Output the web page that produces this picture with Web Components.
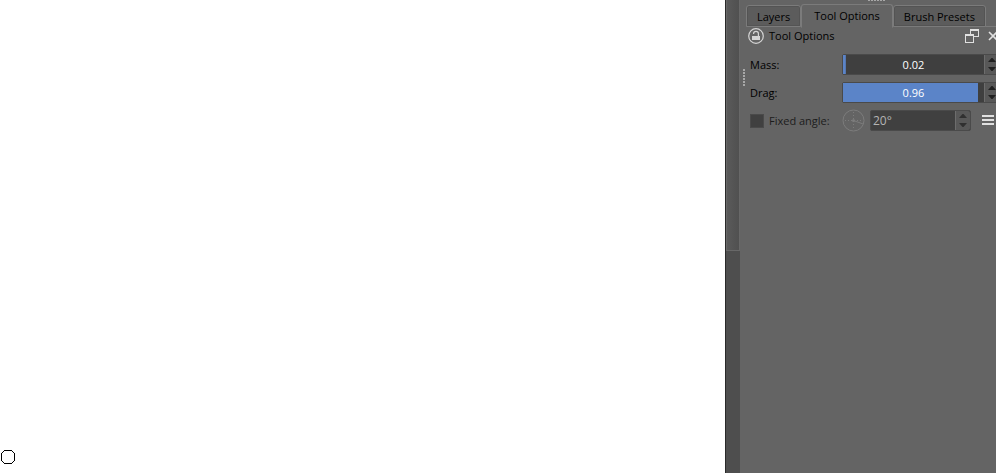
<!DOCTYPE html>
<html lang="en">
<head>
<meta charset="utf-8">
<title>Tool Options</title>
<style>
html, body { margin: 0; height: 100%; overflow: hidden; }
body { font: 11px/16px "Open Sans", "Noto Sans", sans-serif; color: #000; background: #646464; }
</style>
</head>
<body>
<paint-app></paint-app>
<script>
const define = (name, html, init) => {
  const template = document.createElement('template');
  template.innerHTML = html;
  customElements.define(name, class extends HTMLElement {
    constructor() {
      super();
      this.attachShadow({ mode: 'open' }).append(template.content.cloneNode(true));
    }
    connectedCallback() { if (init) init(this, this.shadowRoot); }
  });
};

define('paint-canvas', `
<style>
:host { display: block; position: relative; background: #fff; }
svg { position: absolute; left: 1px; bottom: 9px; display: block; }
</style>
<svg width="14" height="14" viewBox="0 0 14 14" shape-rendering="crispEdges"><path d="M3 0h8v1H3zM3 13h8v1H3zM0 3h1v8H0zM13 3h1v8h-1zM2 1h1v1H2zM11 1h1v1h-1zM1 2h1v1H1zM12 2h1v1h-1zM1 11h1v1H1zM12 11h1v1h-1zM2 12h1v1H2zM11 12h1v1h-1z"/></svg>`);

define('canvas-scrollbar', `
<style>
:host { display: block; box-sizing: border-box; background: #4e4e4e; border-left: 1px solid #2a2a2a; }
div { box-sizing: border-box; height: 53%; border: 1px solid #686868; border-top: 0; background: linear-gradient(90deg, #5a5a5a, #505050); }
</style>
<div></div>`);

define('dock-tabs', `
<style>
:host { display: flex; align-items: flex-end; height: 24px; padding: 4px 0 0 6px; background: linear-gradient(#7b7b7b, #7b7b7b) 6px 26px / 100% 1px no-repeat; }
button { box-sizing: border-box; height: 22px; padding: 2px 10px 0; margin-bottom: 1px; border: 1px solid #7b7b7b; border-radius: 3px 3px 0 0; background: #5c5c5c; box-shadow: inset 0 0 0 1px #545454; font: inherit; color: inherit; white-space: nowrap; }
button[aria-selected=true] { height: 24px; padding: 0 12px; margin-bottom: 0; background: #646464; border-bottom-color: #646464; box-shadow: none; }
</style>
<button role="tab">Layers</button><button role="tab" aria-selected="true">Tool Options</button><button role="tab">Brush Presets</button>`);

define('dock-header', `
<style>
:host { display: flex; align-items: center; height: 16px; padding-left: 8px; width: 250px; }
button { display: block; padding: 0; border: 0; background: none; line-height: 0; }
span { flex: 1; margin-left: 5px; }
button + button { margin-left: 9px; }
</style>
<button aria-label="Lock docker"><svg width="16" height="16" viewBox="0 0 16 16" fill="none" stroke="#d4d4d4"><circle cx="8" cy="8" r="7.3" stroke-width="1.2"/><path d="M4 8h8v4H4z" fill="#d4d4d4" stroke="none"/><path d="M5.6 6V5.6a2.4 2.2 0 0 1 4.8 0V8" stroke-width="1.2"/></svg></button>
<span>Tool Options</span>
<button aria-label="Float docker"><svg width="14" height="14" viewBox="0 0 14 14" fill="none" stroke="#e0e0e0" shape-rendering="crispEdges"><path d="M5.5 5V.5h8v7H9M.5 5.5h8v8h-8zM5 1.5h8M1 6.5h7"/></svg></button>
<button aria-label="Close docker"><svg width="10" height="10" viewBox="0 0 10 10" fill="none" stroke="#e0e0e0" stroke-width="1.6"><path d="M1 1l8 8M9 1L1 9"/></svg></button>`);

define('spin-buttons', `
<style>
:host { display: flex; flex-direction: column; justify-content: center; gap: 1px; box-sizing: border-box; flex: none; width: 15px; border-left: 1px solid #6d6d6d; background: #585858; border-radius: 0 2px 2px 0; }
button { height: 8px; display: flex; align-items: center; justify-content: center; padding: 0; border: 0; background: none; color: inherit; }
svg { display: block; fill: var(--arrow, #202020); }
</style>
<button aria-label="Increase"><svg width="8" height="4" viewBox="0 0 8 4"><path d="M3.5 0h1L8 4H0z"/></svg></button>
<button aria-label="Decrease"><svg width="8" height="4" viewBox="0 0 8 4"><path d="M0 0h8L4.500 4h-1z"/></svg></button>`);

define('value-slider', `
<style>
:host { display: flex; align-items: center; height: 21px; width: 250px; }
label { width: 92px; flex: none; }
div { display: flex; flex: 1; box-sizing: border-box; height: 21px; border: 1px solid #4a4a4a; border-radius: 2px; background: #3f3f3f; }
input { flex: 1; min-width: 0; padding: 0; border: 0; outline: 0; font: inherit; color: #fff; text-align: center; background: linear-gradient(#5b84c8, #5b84c8) no-repeat 0 0 / var(--fill) 100%; }
</style>
<label for="v"></label><div><input id="v" type="text" inputmode="decimal"><spin-buttons></spin-buttons></div>`,
(host, root) => {
  root.querySelector('label').textContent = host.getAttribute('label');
  const input = root.querySelector('input');
  input.value = host.getAttribute('value');
  input.style.setProperty('--fill', input.value * 100 + '%');
});

define('angle-option', `
<style>
:host { display: flex; align-items: center; height: 21px; width: 244px; color: #1c1c1c; --arrow: #303030; }
.check { appearance: none; flex: none; width: 14px; height: 14px; margin: 0 5px 0 0; background: #404040; border: 1px solid #4a4a4a; }
label { width: 73px; flex: none; white-space: nowrap; }
.dial { flex: none; margin-right: 5px; }
div { display: flex; flex: 1; min-width: 0; box-sizing: border-box; height: 21px; border: 1px solid #4a4a4a; border-radius: 2px; background: #404040; }
div input { flex: 1; min-width: 0; padding: 0 0 0 2px; border: 0; background: none; font: inherit; font-size: 12px; color: #b4b4b4; }
.menu { flex: none; margin: 0 0 2px 11px; padding: 0; border: 0; background: none; line-height: 0; }
</style>
<input class="check" type="checkbox" id="c"><label for="c">Fixed angle:</label>
<svg class="dial" width="23" height="23" viewBox="0 0 23 23" fill="none" stroke="#7c7c7c"><circle cx="11.5" cy="11.5" r="10.5"/><path d="M11.5 11.5l9.500 3.500"/><path d="M11.5 3v17M3 11.5h17" stroke-dasharray="1 2"/><circle cx="11.5" cy="11.5" r="1.5" fill="#7c7c7c" stroke="none"/></svg>
<div><input type="text" value="20°" aria-label="Angle"><spin-buttons></spin-buttons></div>
<button class="menu" aria-label="Angle options"><svg width="12" height="10" viewBox="0 0 12 10" fill="#e0e0e0"><path d="M0 0h12v2H0zM0 4h12v2H0zM0 8h12v2H0z"/></svg></button>`);

define('tool-dock', `
<style>
:host { display: block; position: relative; overflow: hidden; background: #646464; }
section { display: flex; flex-direction: column; gap: 7px; padding: 10px 0 0 10px; }
.grip { position: absolute; background: repeating-linear-gradient(var(--dir), #a8a8a8 0 2px, transparent 2px 3px); }
.top { --dir: 90deg; left: 128px; top: 0; width: 17px; height: 1px; }
.side { --dir: 180deg; left: 3px; top: 69px; width: 2px; height: 17px; }
</style>
<dock-tabs></dock-tabs>
<dock-header></dock-header>
<section>
<value-slider label="Mass:" value="0.02"></value-slider>
<value-slider label="Drag:" value="0.96"></value-slider>
<angle-option></angle-option>
</section>
<i class="grip top"></i><i class="grip side"></i>`);

define('paint-app', `
<style>
:host { display: grid; grid-template-columns: minmax(0, 1fr) 15px 256px; height: 100vh; }
</style>
<paint-canvas></paint-canvas><canvas-scrollbar></canvas-scrollbar><tool-dock></tool-dock>`);
</script>
</body>
</html>
